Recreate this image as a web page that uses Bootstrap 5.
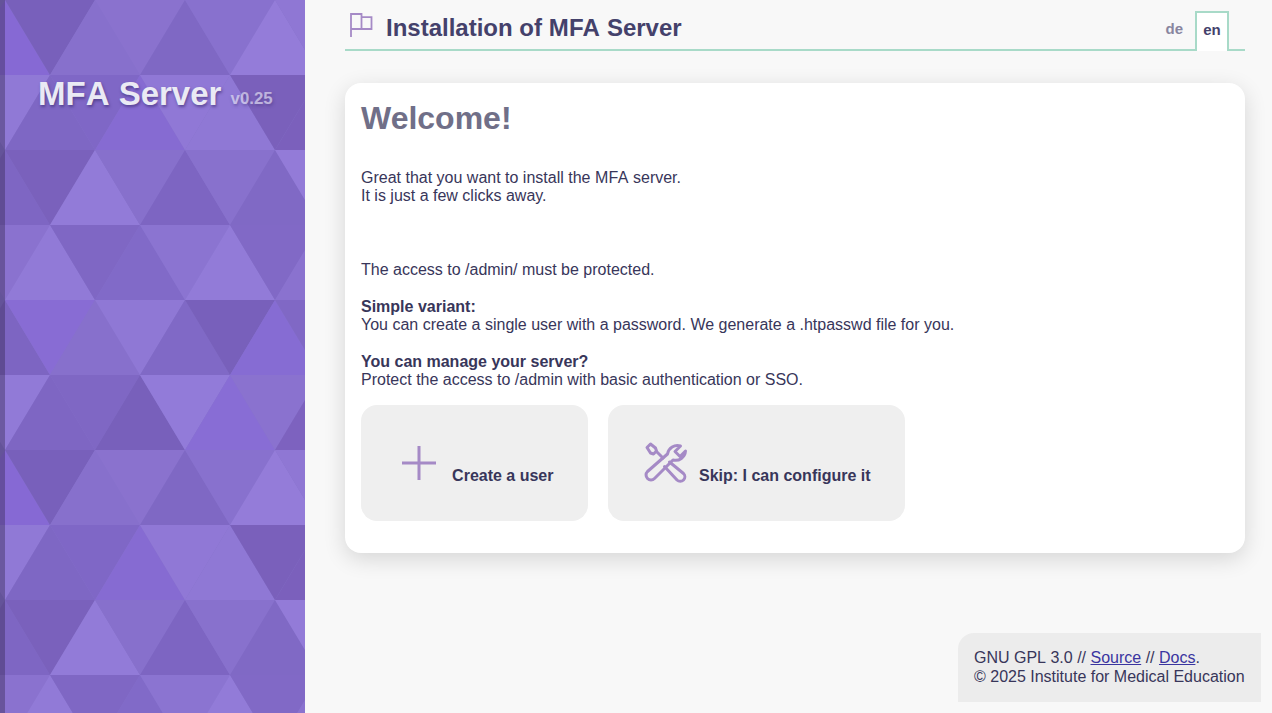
<!DOCTYPE html>
<html lang="en">
<head>
<meta charset="utf-8">
<title>Installation of MFA Server</title>
<link href="https://cdn.jsdelivr.net/npm/bootstrap@5.3.0/dist/css/bootstrap.min.css" rel="stylesheet">
<style>
html,body{height:100%}
body{background:#f8f8f8;color:#38365a;font-family:"Liberation Sans",Arial,sans-serif;font-size:16px;line-height:18.4px}
.app-shell{height:713px;overflow:hidden}
.no-kern{font-kerning:none}
.wide-caps{letter-spacing:.25px}
.side-panel{width:305px;flex:none;border-left:5px solid rgba(40,30,60,.35);background-origin:border-box;background-clip:border-box;background-repeat:repeat-y;background-position:0 0;background-size:305px 450px;
background-image:url("data:image/svg+xml,%3Csvg xmlns='http://www.w3.org/2000/svg' width='305' height='450' viewBox='0 0 305 450'%3E%3Crect width='305' height='450' fill='%238470cb'/%3E%3Cpath fill='%238669d4' d='M-40 75L50 75L5 0Z'/%3E%3Cpath fill='%237860bb' d='M5 0L95 0L50 75Z'/%3E%3Cpath fill='%238770cc' d='M50 75L140 75L95 0Z'/%3E%3Cpath fill='%238a72ce' d='M95 0L185 0L140 75Z'/%3E%3Cpath fill='%237f68c4' d='M140 75L230 75L185 0Z'/%3E%3Cpath fill='%238871ce' d='M185 0L275 0L230 75Z'/%3E%3Cpath fill='%23947cd9' d='M230 75L320 75L275 0Z'/%3E%3Cpath fill='%238f77d4' d='M275 0L365 0L320 75Z'/%3E%3Cpath fill='%239079d6' d='M-40 75L50 75L5 150Z'/%3E%3Cpath fill='%237e67c4' d='M5 150L95 150L50 75Z'/%3E%3Cpath fill='%237f67c6' d='M50 75L140 75L95 150Z'/%3E%3Cpath fill='%23866bd2' d='M95 150L185 150L140 75Z'/%3E%3Cpath fill='%239078d6' d='M140 75L230 75L185 150Z'/%3E%3Cpath fill='%238f78d5' d='M185 150L275 150L230 75Z'/%3E%3Cpath fill='%237a60bb' d='M230 75L320 75L275 150Z'/%3E%3Cpath fill='%237b60bc' d='M275 150L365 150L320 75Z'/%3E%3Cpath fill='%237e66c3' d='M-40 225L50 225L5 150Z'/%3E%3Cpath fill='%237a61bc' d='M5 150L95 150L50 225Z'/%3E%3Cpath fill='%23927bd8' d='M50 225L140 225L95 150Z'/%3E%3Cpath fill='%238770cc' d='M95 150L185 150L140 225Z'/%3E%3Cpath fill='%237d65c2' d='M140 225L230 225L185 150Z'/%3E%3Cpath fill='%238871cd' d='M185 150L275 150L230 225Z'/%3E%3Cpath fill='%238069c5' d='M230 225L320 225L275 150Z'/%3E%3Cpath fill='%23937bd8' d='M275 150L365 150L320 225Z'/%3E%3Cpath fill='%238a72cf' d='M-40 225L50 225L5 300Z'/%3E%3Cpath fill='%23917ad7' d='M5 300L95 300L50 225Z'/%3E%3Cpath fill='%237f67c4' d='M50 225L140 225L95 300Z'/%3E%3Cpath fill='%23816ac8' d='M95 300L185 300L140 225Z'/%3E%3Cpath fill='%238b74d1' d='M140 225L230 225L185 300Z'/%3E%3Cpath fill='%23927bd8' d='M185 300L275 300L230 225Z'/%3E%3Cpath fill='%238169c6' d='M230 225L320 225L275 300Z'/%3E%3Cpath fill='%238a72cf' d='M275 300L365 300L320 225Z'/%3E%3Cpath fill='%237d65c2' d='M-40 375L50 375L5 300Z'/%3E%3Cpath fill='%23886cd4' d='M5 300L95 300L50 375Z'/%3E%3Cpath fill='%238770cc' d='M50 375L140 375L95 300Z'/%3E%3Cpath fill='%238f78d5' d='M95 300L185 300L140 375Z'/%3E%3Cpath fill='%238069c6' d='M140 375L230 375L185 300Z'/%3E%3Cpath fill='%237860bb' d='M185 300L275 300L230 375Z'/%3E%3Cpath fill='%23866cd3' d='M230 375L320 375L275 300Z'/%3E%3Cpath fill='%238068c5' d='M275 300L365 300L320 375Z'/%3E%3Cpath fill='%23917ad7' d='M-40 375L50 375L5 450Z'/%3E%3Cpath fill='%237e66c3' d='M5 450L95 450L50 375Z'/%3E%3Cpath fill='%237f67c4' d='M50 375L140 375L95 450Z'/%3E%3Cpath fill='%237860bb' d='M95 450L185 450L140 375Z'/%3E%3Cpath fill='%23927bd9' d='M140 375L230 375L185 450Z'/%3E%3Cpath fill='%23886dd5' d='M185 450L275 450L230 375Z'/%3E%3Cpath fill='%238a72cf' d='M230 375L320 375L275 450Z'/%3E%3Cpath fill='%237d62bf' d='M275 450L365 450L320 375Z'/%3E%3C/svg%3E");}
.side-title{margin:75px 0 0 33px;font-size:33px;line-height:38px;font-weight:700;color:#eaeaf4;text-shadow:1px 2px 3px rgba(50,35,100,.55);white-space:nowrap}
.side-ver{font-size:16.8px;opacity:.6;vertical-align:1px}
.main-col{padding:0 27px 0 40px;min-width:0}
.top-bar{height:51px;border-bottom:2px solid #a8dac8}
.top-flag{margin:13px 13px 0 4px;flex:none}
.top-title{font-size:24px;line-height:28px;font-weight:700;color:#44416b;margin:14px 0 0}
.top-title .wide-caps{letter-spacing:.3px}
.lang-tabs{margin-right:16px;height:51px;padding-top:11px}
.lang-item{font-size:15px;line-height:17px;font-weight:700;text-decoration:none;padding:9px 6px 0;color:#8886a0}
.lang-item.is-on{background:#fff;color:#44416b;border:2px solid #a8dac8;border-bottom:0;height:40px;width:34px;text-align:center;padding:8px 0 0;margin-left:6px;position:relative}
.wel-panel{margin-top:32px;background:#fff;border-radius:16px;box-shadow:0 6px 22px rgba(0,0,0,.14);padding:17px 16px 32px}
.wel-head{font-size:32px;line-height:37px;font-weight:700;color:#706f88;margin:0 0 32px}
.wel-text{margin:0 0 15px}
.act-row{gap:20px}
.act-btn{background:#efefef;border:0;border-radius:16px;padding:34px;color:#38365a;font-weight:700;font-size:16px;line-height:18.4px}
.act-btn:hover{background:#e8e8e8;color:#38365a}
.act-btn svg{flex:none}
.act-label{margin:0 .4px 1px 9.1px;white-space:nowrap}
.foot-box{background:#ececec;border-top-left-radius:16px;padding:16px;margin:0 -16px 11px auto;color:#38365a;width:303px;white-space:nowrap}
.foot-box a{color:#3a35a0}
</style>
</head>
<body>
<div class="app-shell d-flex">
  <aside class="side-panel">
    <div class="side-title"><span class="no-kern">MFA Server</span> <span class="side-ver">v0.25</span></div>
  </aside>
  <div class="main-col flex-grow-1 d-flex flex-column">
    <header class="top-bar d-flex">
      <svg class="top-flag" width="24" height="24" viewBox="0 0 24 24" fill="none" stroke="#a58ac6" stroke-width="1.8"><path d="M2 0V24M2 1H12.5V16H2M12.5 4.2H22.5V16H2"/></svg>
      <h1 class="top-title flex-grow-1">Installation of <span class="wide-caps">MFA</span> Server</h1>
      <nav class="lang-tabs d-flex align-items-start">
        <a class="lang-item" href="#">de</a>
        <a class="lang-item is-on" href="#">en</a>
      </nav>
    </header>
    <main class="wel-panel">
      <h2 class="wel-head">Welcome!</h2>
      <p class="wel-text">Great that you want to install the <span class="wide-caps">MFA</span> server.<br>It is just a few clicks away.<br><br><br><br>The access to /admin/ must be protected.<br><br><strong>Simple variant:</strong><br>You can create a single user with a password. We generate a .htpasswd file for you.<br><br><strong>You can manage your server?</strong><br>Protect the access to /admin with basic authentication or SSO.</p>
      <div class="d-flex act-row">
        <a class="act-btn btn d-inline-flex align-items-end" href="#">
          <svg width="48" height="48" viewBox="0 0 48 48" fill="none" stroke="#a58ac6" stroke-width="3"><path d="M24 7V41M7 24H41"/></svg>
          <span class="act-label">Create a user</span>
        </a>
        <a class="act-btn btn d-inline-flex align-items-end" href="#">
          <svg width="48" height="48" viewBox="0 0 48 48" fill="none" stroke="#a58ac6" stroke-width="3" stroke-linejoin="round" stroke-linecap="round"><path d="M5 8.5L8.5 5L13.5 9L14.5 12L11.5 15L8.5 14ZM14.5 12.5L21 19M27.5 23L41.5 34.5A4.5 4.5 0 0 1 35 41L22.5 27.5"/><path d="M25.5 15L5.5 32.5A4.8 4.8 0 0 0 12.5 39.5L31 21A10 10 0 0 0 43.5 12L38 17.5L33 12.5L38.5 7A10 10 0 0 0 25.5 15Z"/></svg>
          <span class="act-label">Skip: I can configure it</span>
        </a>
      </div>
    </main>
    <footer class="foot-box mt-auto"><span class="no-kern">GNU GPL 3.0 // </span><a href="#">Source</a> // <a href="#">Docs</a>.<br>© 2025 Institute for Medical Education</footer>
  </div>
</div>
<script src="https://cdn.jsdelivr.net/npm/bootstrap@5.3.0/dist/js/bootstrap.bundle.min.js"></script>
</body>
</html>
